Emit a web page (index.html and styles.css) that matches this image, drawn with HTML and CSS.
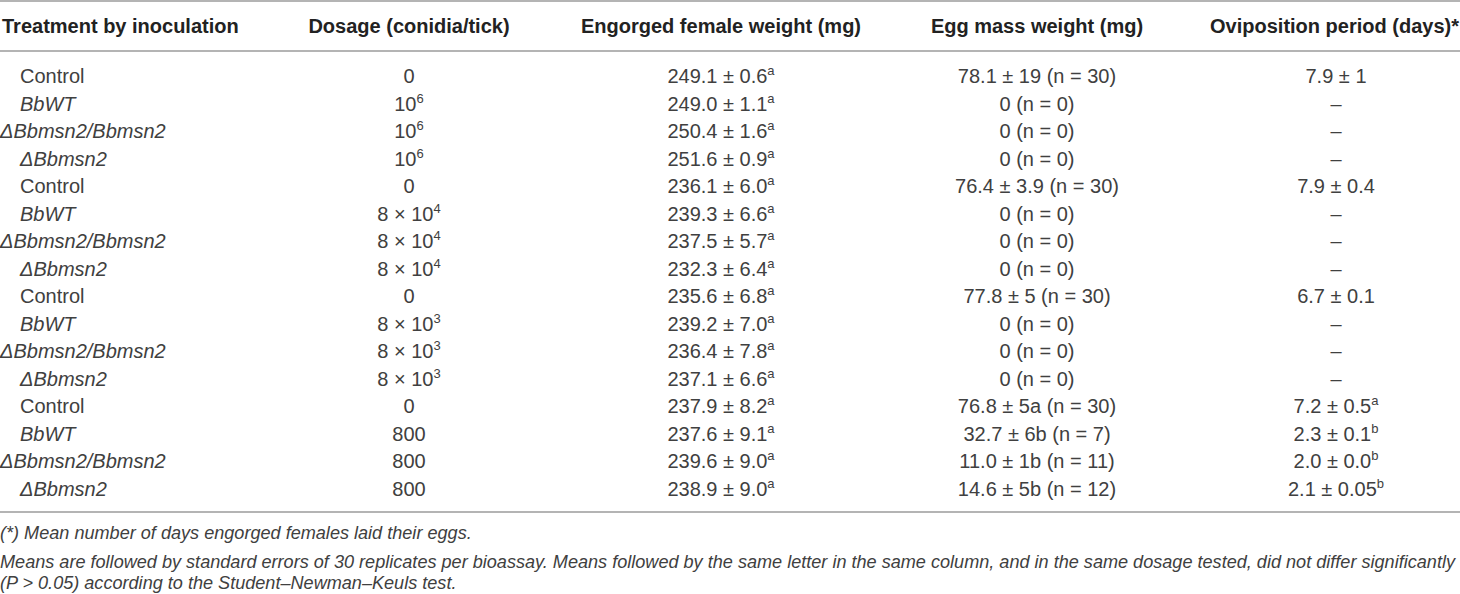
FILE: index.html
```html
<!DOCTYPE html>
<html lang="en">
<head>
    <meta charset="UTF-8">
    <meta name="viewport" content="width=device-width, initial-scale=1.0">
    <title>Tick bioassay</title>
    <link rel="stylesheet" href="styles.css">
</head>
<body>
    <table class="results">
        <colgroup>
            <col class="c-treat">
            <col class="c-dose">
            <col class="c-weight">
            <col class="c-egg">
            <col class="c-ovi">
        </colgroup>
        <thead>
            <tr>
                <th class="treat">Treatment by inoculation</th>
                <th>Dosage (conidia/tick)</th>
                <th>Engorged female weight (mg)</th>
                <th>Egg mass weight (mg)</th>
                <th class="ovi">Oviposition period (days)*</th>
            </tr>
        </thead>
        <tbody>
            <tr class="first">
                <td class="treat">Control</td>
                <td>0</td>
                <td>249.1 ± 0.6<sup>a</sup></td>
                <td>78.1 ± 19 (n = 30)</td>
                <td class="ovi">7.9 ± 1</td>
            </tr>
            <tr>
                <td class="treat"><i>BbWT</i></td>
                <td>10<sup>6</sup></td>
                <td>249.0 ± 1.1<sup>a</sup></td>
                <td>0 (n = 0)</td>
                <td class="ovi">–</td>
            </tr>
            <tr>
                <td class="treat flush"><i>ΔBbmsn2/Bbmsn2</i></td>
                <td>10<sup>6</sup></td>
                <td>250.4 ± 1.6<sup>a</sup></td>
                <td>0 (n = 0)</td>
                <td class="ovi">–</td>
            </tr>
            <tr>
                <td class="treat"><i>ΔBbmsn2</i></td>
                <td>10<sup>6</sup></td>
                <td>251.6 ± 0.9<sup>a</sup></td>
                <td>0 (n = 0)</td>
                <td class="ovi">–</td>
            </tr>
            <tr>
                <td class="treat">Control</td>
                <td>0</td>
                <td>236.1 ± 6.0<sup>a</sup></td>
                <td>76.4 ± 3.9 (n = 30)</td>
                <td class="ovi">7.9 ± 0.4</td>
            </tr>
            <tr>
                <td class="treat"><i>BbWT</i></td>
                <td>8 × 10<sup>4</sup></td>
                <td>239.3 ± 6.6<sup>a</sup></td>
                <td>0 (n = 0)</td>
                <td class="ovi">–</td>
            </tr>
            <tr>
                <td class="treat flush"><i>ΔBbmsn2/Bbmsn2</i></td>
                <td>8 × 10<sup>4</sup></td>
                <td>237.5 ± 5.7<sup>a</sup></td>
                <td>0 (n = 0)</td>
                <td class="ovi">–</td>
            </tr>
            <tr>
                <td class="treat"><i>ΔBbmsn2</i></td>
                <td>8 × 10<sup>4</sup></td>
                <td>232.3 ± 6.4<sup>a</sup></td>
                <td>0 (n = 0)</td>
                <td class="ovi">–</td>
            </tr>
            <tr>
                <td class="treat">Control</td>
                <td>0</td>
                <td>235.6 ± 6.8<sup>a</sup></td>
                <td>77.8 ± 5 (n = 30)</td>
                <td class="ovi">6.7 ± 0.1</td>
            </tr>
            <tr>
                <td class="treat"><i>BbWT</i></td>
                <td>8 × 10<sup>3</sup></td>
                <td>239.2 ± 7.0<sup>a</sup></td>
                <td>0 (n = 0)</td>
                <td class="ovi">–</td>
            </tr>
            <tr>
                <td class="treat flush"><i>ΔBbmsn2/Bbmsn2</i></td>
                <td>8 × 10<sup>3</sup></td>
                <td>236.4 ± 7.8<sup>a</sup></td>
                <td>0 (n = 0)</td>
                <td class="ovi">–</td>
            </tr>
            <tr>
                <td class="treat"><i>ΔBbmsn2</i></td>
                <td>8 × 10<sup>3</sup></td>
                <td>237.1 ± 6.6<sup>a</sup></td>
                <td>0 (n = 0)</td>
                <td class="ovi">–</td>
            </tr>
            <tr>
                <td class="treat">Control</td>
                <td>0</td>
                <td>237.9 ± 8.2<sup>a</sup></td>
                <td>76.8 ± 5a (n = 30)</td>
                <td class="ovi">7.2 ± 0.5<sup>a</sup></td>
            </tr>
            <tr>
                <td class="treat"><i>BbWT</i></td>
                <td>800</td>
                <td>237.6 ± 9.1<sup>a</sup></td>
                <td>32.7 ± 6b (n = 7)</td>
                <td class="ovi">2.3 ± 0.1<sup>b</sup></td>
            </tr>
            <tr>
                <td class="treat flush"><i>ΔBbmsn2/Bbmsn2</i></td>
                <td>800</td>
                <td>239.6 ± 9.0<sup>a</sup></td>
                <td>11.0 ± 1b (n = 11)</td>
                <td class="ovi">2.0 ± 0.0<sup>b</sup></td>
            </tr>
            <tr class="last">
                <td class="treat"><i>ΔBbmsn2</i></td>
                <td>800</td>
                <td>238.9 ± 9.0<sup>a</sup></td>
                <td>14.6 ± 5b (n = 12)</td>
                <td class="ovi">2.1 ± 0.05<sup>b</sup></td>
            </tr>
        </tbody>
    </table>

    <div class="notes">
        <p class="note-star">(*) Mean number of days engorged females laid their eggs.</p>
        <p>Means are followed by standard errors of 30 replicates per bioassay. Means followed by the same letter in the same column, and in the same dosage tested, did not differ significantly (P &gt; 0.05) according to the Student–Newman–Keuls test.</p>
    </div>
</body>
</html>
```

FILE: styles.css
```css
body {
    margin: 0;
    font-family: "Liberation Sans", Arial, sans-serif;
    color: #404040;
    background-color: #fff;
}
.results {
    width: 1460px;
    border-collapse: collapse;
    table-layout: fixed;
    font-size: 20px;
}
.c-treat { width: 253px; }
.c-dose { width: 312px; }
.c-weight { width: 312px; }
.c-egg { width: 320px; }
.c-ovi { width: 263px; }

.results th {
    height: 48px;
    padding: 0;
    font-weight: bold;
    color: #222;
    text-align: center;
    white-space: nowrap;
    border-top: 2px solid #b4b4b4;
    border-bottom: 2px solid #b4b4b4;
}
.results td {
    padding: 0;
    line-height: 27.5px;
    text-align: center;
    white-space: nowrap;
}
.results th.treat {
    text-align: left;
    padding-left: 2px;
}
.results td.treat {
    text-align: left;
    padding-left: 20px;
}
.results td.flush {
    padding-left: 0;
}
.results .ovi {
    padding-left: 15px;
}
.results th.ovi {
    padding-left: 12px;
}
.results tr.first td {
    padding-top: 11px;
}
.results tr.last td {
    padding-bottom: 8px;
    border-bottom: 2px solid #b4b4b4;
}
sup {
    font-size: 13px;
    line-height: 0;
    vertical-align: 8px;
}
.notes {
    font-style: italic;
    font-size: 18.1px;
}
.notes p {
    margin: 0;
    line-height: 21px;
}
.notes .note-star {
    line-height: 22px;
    margin-top: 9px;
    margin-bottom: 8px;
}
```
